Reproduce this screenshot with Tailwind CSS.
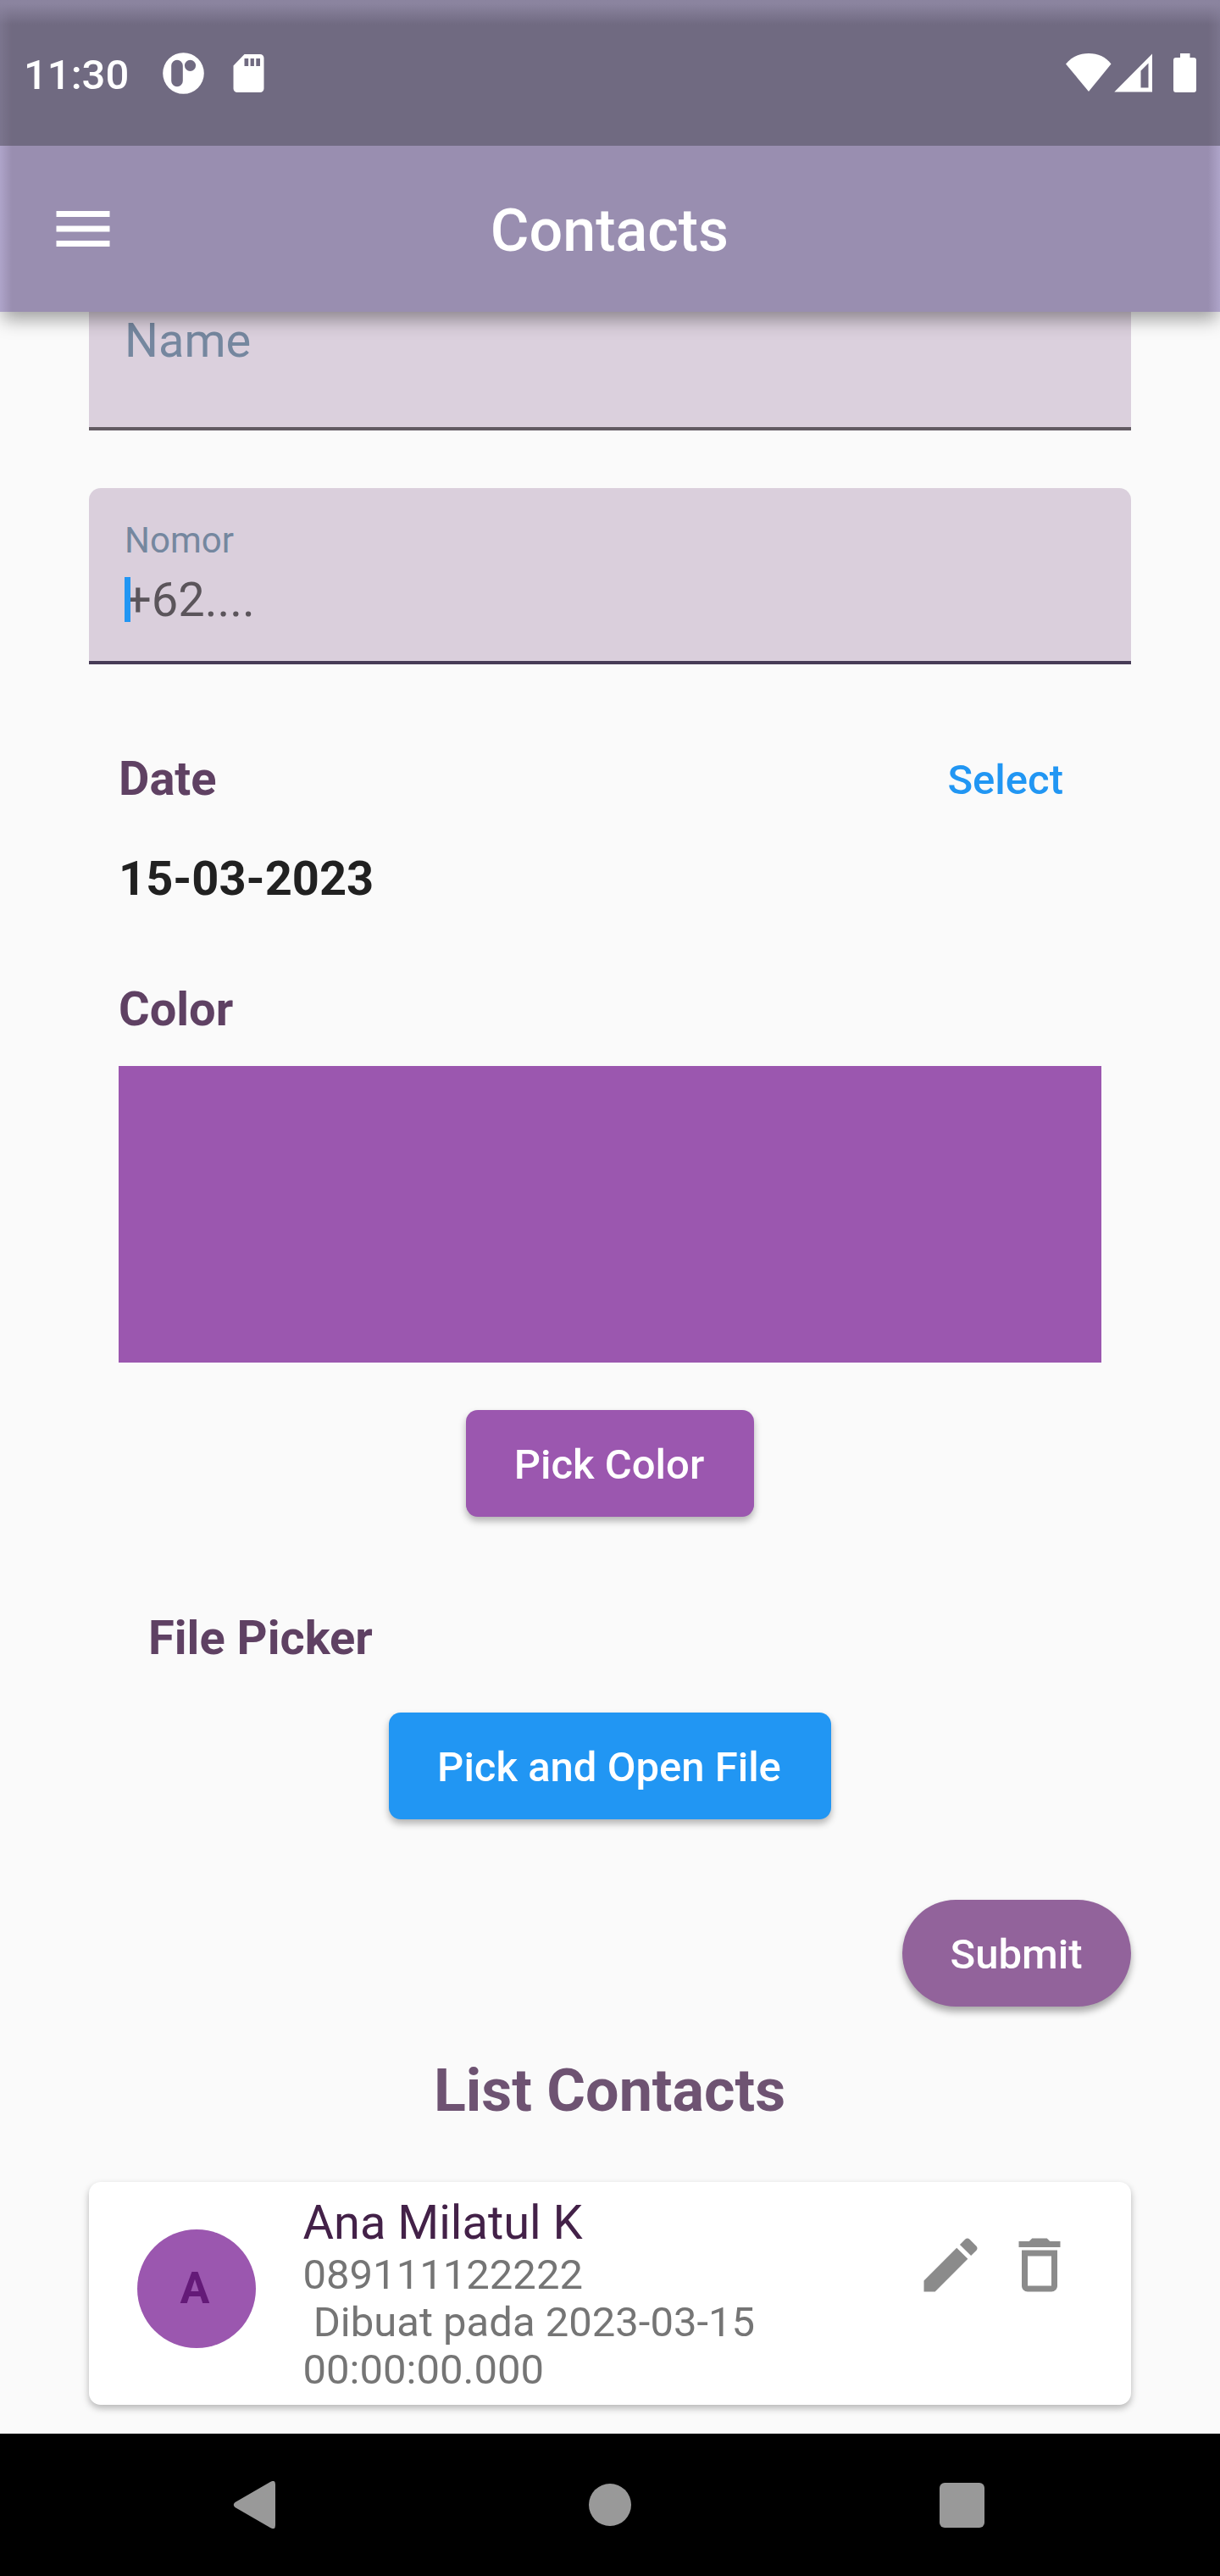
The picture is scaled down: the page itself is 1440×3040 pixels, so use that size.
<!DOCTYPE html>
<html lang="id">
<head>
<meta charset="utf-8">
<title>Contacts</title>
<script src="https://cdn.jsdelivr.net/npm/@tailwindcss/browser@4"></script>
</head>
<body class="bg-[#fafafa]">
<div class="flex h-[3040px] w-[1440px] flex-col overflow-hidden bg-[#fafafa] font-['Roboto',sans-serif] text-[56px] leading-[66px]">

  <header class="relative z-10 h-[368px] shrink-0 bg-[#998eb0] shadow-[0_12px_20px_-3px_rgba(0,0,0,0.36)]">
    <!-- soft light edges of the translucent bar -->
    <div class="pointer-events-none absolute inset-y-0 left-0 w-[14px] bg-linear-to-r from-[#aea4c9] to-[#998eb0]"></div>
    <div class="pointer-events-none absolute inset-y-0 right-0 w-[14px] bg-linear-to-l from-[#aea4c9] to-[#998eb0]"></div>

    <div class="relative flex h-[172px] items-start bg-[#484651]/50 text-white">
      <div class="pointer-events-none absolute inset-x-0 top-0 h-[29px] bg-linear-to-b from-[#8b849f] from-15% to-[#8b849f]/0"></div>
      <span class="ml-[28px] mt-[60px] w-[128px] text-[49px] font-medium leading-[58px]">11:30</span>
      <svg class="ml-[36px] mt-[62px] h-[49px] w-[49px]" viewBox="0 0 49 49" fill="white">
        <path fill-rule="evenodd" d="M24.500 .2a24.300 24.300 0 1 0 0 48.600a24.300 24.300 0 1 0 0-48.600ZM17 8.700a6.800 6.800 0 0 1 6.800 6.800v17.900a6.800 6.800 0 0 1-13.600 0V15.500A6.800 6.800 0 0 1 17 8.700ZM32.500 8.700a6.600 6.600 0 1 1 0 13.200a6.600 6.600 0 1 1 0-13.200Z"/>
      </svg>
      <svg class="ml-[34px] mt-[64px] h-[45px] w-[37px]" viewBox="0 0 37 45" fill="white">
        <path fill-rule="evenodd" d="M13.500 0H32a4.500 4.500 0 0 1 4.500 4.500v36A4.500 4.500 0 0 1 32 45H5A4.500 4.500 0 0 1 .5 40.500V13.500ZM13.500 5v9h4.700V5ZM20.600 5v9h4.300V5ZM27.300 5v9h4.700V5Z"/>
      </svg>
      <div class="ml-auto mr-[28px] mt-[62px] flex">
        <svg class="h-[48px] w-[54px]" viewBox="0 0 54 48" fill="white"><path d="M0 13.500C7 5 16 1 27 1s20 4 26.500 12.500L27 46Z"/></svg>
        <svg class="ml-[3px] h-[48px] w-[45px]" viewBox="0 0 45 48" fill="white"><path fill-rule="evenodd" d="M.3 46.500L45 1.500v45ZM40.500 12.500L31.500 21.500V41.500H40.500Z"/></svg>
        <svg class="ml-[25px] h-[48px] w-[27px]" viewBox="0 0 27 48" fill="white"><path d="M8 1h11.500v5H24a3 3 0 0 1 3 3v35a3 3 0 0 1-3 3H3a3 3 0 0 1-3-3V9a3 3 0 0 1 3-3h5Z"/></svg>
      </div>
    </div>

    <div class="relative flex h-[196px] items-center text-white">
      <svg class="ml-[56px] h-[84px] w-[84px]" viewBox="0 0 24 24" fill="white"><path d="M3 18h18v-2H3v2zm0-5h18v-2H3v2zm0-7v2h18V6H3z"/></svg>
      <h1 class="ml-[-140px] w-full pr-px pt-[3px] text-center text-[70px] font-medium leading-[82px]">Contacts</h1>
    </div>
  </header>

  <main class="flex h-[2504px] shrink-0 flex-col px-[105px]">
    <div class="h-[140px] border-b-4 border-[#625b62] bg-[#dbd0dd] pl-[42px] pt-px text-[#75879f]">Name</div>

    <div class="mt-[68px] h-[208px] rounded-t-[14px] border-b-4 border-[#473b56] bg-[#dacfdc] pl-[42px] pt-[38px]">
      <div class="text-[42px] leading-[48px] text-[#75879f]">Nomor</div>
      <div class="relative mt-[13px] text-[#5b555b]">+62....
        <span class="absolute left-0 top-[6px] h-[53px] w-[7px] bg-[#2196f3]"></span>
      </div>
    </div>

    <section class="mt-[102px] px-[35px]">
      <div class="flex h-[66px] items-start justify-between">
        <h2 class="font-bold text-[#5f4163]">Date</h2>
        <button class="mr-[45px] text-[49px] font-medium leading-[69px] text-[#2196f3]">Select</button>
      </div>
      <p class="mt-[52px] font-bold text-[#212121]">15-03-2023</p>
      <h2 class="mt-[88px] font-bold text-[#5f4163]">Color</h2>
      <div class="mt-[34px] h-[350px] bg-[#9b57af]"></div>
      <button class="mx-auto mt-[56px] flex h-[126px] w-[340px] items-center justify-center rounded-[14px] bg-[#9b57af] pr-[2px] pt-[3px] text-[49px] font-medium text-white shadow-[0_5px_8px_rgba(0,0,0,0.29)]">Pick Color</button>
      <h2 class="mt-[110px] pl-[35px] font-bold text-[#5f4163]">File Picker</h2>
      <button class="mx-auto mt-[55px] flex h-[126px] w-[522px] items-center justify-center rounded-[14px] bg-[#2196f3] pr-[2px] pt-[3px] text-[49px] font-medium text-white shadow-[0_5px_8px_rgba(0,0,0,0.29)]">Pick and Open File</button>
    </section>

    <button class="ml-auto mt-[95px] flex h-[126px] w-[270px] items-center justify-center rounded-full bg-[#92639b] pr-px pt-[3px] text-[49px] font-medium text-white shadow-[0_6px_9px_rgba(0,0,0,0.33)]">Submit</button>

    <h2 class="mt-[58px] pr-px text-center text-[70px] font-bold leading-[82px] text-[#6e5372]">List Contacts</h2>

    <article class="mt-[66.5px] flex h-[263px] rounded-[14px] bg-white pl-[56.5px] shadow-[0_4px_8px_rgba(0,0,0,0.28)]">
      <div class="mt-[56px] flex h-[140px] w-[140px] items-center justify-center rounded-full bg-[#9b57af] pr-[3px] pt-px text-[52px] font-bold text-[#641a78]">A</div>
      <div class="ml-[56px] mt-[15px]">
        <p class="text-[#432148]">Ana Milatul K</p>
        <p class="mt-px whitespace-pre text-[49px] leading-[56px] text-[#757575]">089111122222
 Dibuat pada 2023-03-15
00:00:00.000</p>
      </div>
      <div class="ml-auto mr-[66px] mt-[56px] flex gap-[21px]">
        <svg class="h-[84px] w-[84px]" viewBox="0 0 24 24" fill="#8b8b8b"><path d="M3 17.250V21h3.750L17.810 9.940l-3.750-3.750L3 17.250zM20.710 7.040c.39-.39.39-1.020 0-1.410l-2.340-2.340c-.39-.39-1.020-.39-1.410 0l-1.830 1.830 3.750 3.750 1.830-1.830z"/></svg>
        <svg class="h-[84px] w-[84px]" viewBox="0 0 24 24" fill="#8b8b8b"><path d="M6 19c0 1.100.9 2 2 2h8c1.100 0 2-.9 2-2V7H6v12zM8 9h8v10H8V9zm7.500-5l-1-1h-5l-1 1H5v2h14V4h-3.500z"/></svg>
      </div>
    </article>
  </main>

  <nav class="flex h-[168px] shrink-0 items-center bg-black pl-[275px]">
    <svg class="h-[56px] w-[51px]" viewBox="0 0 51 56" fill="#999"><path d="M44 1Q50 -2.500 50 4V52Q50 58.500 44 55L2.500 31Q-1 28 2.500 25Z"/></svg>
    <div class="ml-[369px] h-[50px] w-[50px] rounded-full bg-[#999]"></div>
    <div class="ml-[364px] h-[53px] w-[53px] rounded-[6px] bg-[#999]"></div>
  </nav>
</div>
</body>
</html>
